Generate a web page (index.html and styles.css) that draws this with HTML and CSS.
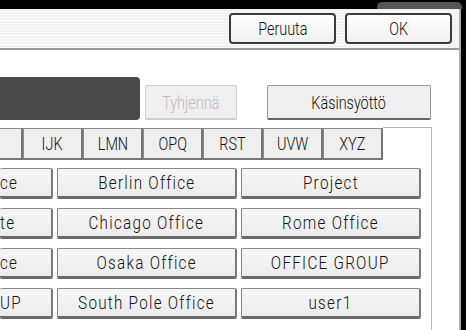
FILE: index.html
```html
<!DOCTYPE html>
<html lang="fi">
<head>
    <meta charset="UTF-8">
    <title>Osoitekirja</title>
    <link rel="stylesheet" href="styles.css">
</head>
<body>
    <div class="top-strip">
        <div class="top-tab"></div>
    </div>
    <div class="screen">
        <div class="header">
            <button class="head-button"><span class="lbl">Peruuta</span></button>
            <button class="head-button"><span class="lbl">OK</span></button>
        </div>

        <div class="search-row">
            <div class="search-box"></div>
            <button class="flat-button disabled"><span class="lbl">Tyhjennä</span></button>
            <button class="flat-button manual"><span class="lbl">Käsinsyöttö</span></button>
        </div>

        <div class="panel">
            <div class="tabs">
                <div class="tab first"></div>
                <div class="tab"><span class="lbl">IJK</span></div>
                <div class="tab"><span class="lbl">LMN</span></div>
                <div class="tab"><span class="lbl">OPQ</span></div>
                <div class="tab"><span class="lbl">RST</span></div>
                <div class="tab"><span class="lbl">UVW</span></div>
                <div class="tab"><span class="lbl">XYZ</span></div>
                <div class="tab-rest"></div>
            </div>
            <div class="list">
                <button class="entry cut"><span class="mono">ce</span></button>
                <button class="entry"><span class="mono">Berlin Office</span></button>
                <button class="entry"><span class="mono">Project</span></button>

                <button class="entry cut"><span class="mono">te</span></button>
                <button class="entry"><span class="mono">Chicago Office</span></button>
                <button class="entry"><span class="mono">Rome Office</span></button>

                <button class="entry cut"><span class="mono">ce</span></button>
                <button class="entry"><span class="mono">Osaka Office</span></button>
                <button class="entry"><span class="mono">OFFICE GROUP</span></button>

                <button class="entry cut"><span class="mono">UP</span></button>
                <button class="entry"><span class="mono">South Pole Office</span></button>
                <button class="entry"><span class="mono">user1</span></button>
            </div>
        </div>
    </div>
</body>
</html>
```

FILE: styles.css
```css
* {
    margin: 0;
    padding: 0;
    box-sizing: border-box;
}

body {
    width: 466px;
    height: 330px;
    overflow: hidden;
    background: #000;
    font-family: Roboto, 'Liberation Sans', sans-serif;
    color: #111;
}

button {
    font: inherit;
    color: inherit;
    cursor: pointer;
}

.lbl {
    display: inline-block;
    font-size: 18px;
    font-weight: 300;
    transform: scaleX(0.8);
}

.mono {
    display: inline-block;
    font-size: 19px;
    font-weight: 300;
    letter-spacing: 1.6px;
    transform: scaleX(0.8);
    white-space: nowrap;
}

.top-strip {
    height: 9px;
    display: flex;
    justify-content: flex-end;
    padding-top: 2px;
    padding-right: 4px;
}

.top-tab {
    width: 85px;
    background: #555;
    border-radius: 5px 5px 0 0;
}

.screen {
    width: 461px;
    height: 321px;
    background: #fff;
    border-right: 2px solid #aaa;
    display: flex;
    flex-direction: column;
}

.header {
    height: 41px;
    padding: 4px 7px 0 0;
    display: flex;
    justify-content: flex-end;
    align-items: flex-start;
    gap: 9px;
    background: repeating-linear-gradient(to bottom, #f2f2f2 0, #f2f2f2 2px, #fafafa 2px, #fafafa 3px);
    border-bottom: 2px solid #9a9a9a;
}

.head-button {
    width: 107px;
    height: 31px;
    border: 2px solid #3c3c3c;
    border-radius: 4px;
    background: linear-gradient(#ffffff, #f0f0f0);
}

.search-row {
    display: flex;
    align-items: flex-end;
    height: 70px;
    padding-top: 27px;
}

.search-box {
    width: 140px;
    height: 43px;
    background: #4a4a4a;
    border-radius: 0 4px 4px 0;
}

.flat-button {
    height: 35px;
    background: #efefef;
    border: 1px solid #9a9a9a;
    border-bottom: 2px solid #666;
    border-radius: 2px;
}

.flat-button.disabled {
    width: 92px;
    margin-left: 5px;
    color: #bcbcbc;
    border-color: #cfcfcf;
}

.flat-button.manual {
    width: 164px;
    margin-left: 30px;
}

.panel {
    margin-top: 7px;
    width: 432px;
    flex: 1;
    border-right: 1px solid #b8b8b8;
}

.tabs {
    display: flex;
    height: 32px;
}

.tab {
    width: 60px;
    height: 32px;
    border: 1px solid #8a8a8a;
    border-right: 2px solid #777;
    border-bottom: 2px solid #777;
    background: #efefef;
    display: flex;
    align-items: center;
    justify-content: center;
    margin-top: 1px;
}

.tab.first {
    width: 23px;
    border-left: none;
}

.tab-rest {
    flex: 1;
    border-top: 1px solid #b8b8b8;
}

.list {
    display: grid;
    grid-template-columns: 53px 180px 180px;
    grid-auto-rows: 31px;
    column-gap: 4px;
    row-gap: 9px;
    padding-top: 9px;
}

.entry {
    background: linear-gradient(#f6f6f6, #ececec);
    border: 1px solid #8a8a8a;
    border-bottom: 3px solid #6a6a6a;
    border-right: 2px solid #7a7a7a;
    border-radius: 2px;
    overflow: hidden;
}

.entry.cut {
    border-left: none;
    text-align: left;
}

.entry.cut .mono {
    transform-origin: left center;
}
```
